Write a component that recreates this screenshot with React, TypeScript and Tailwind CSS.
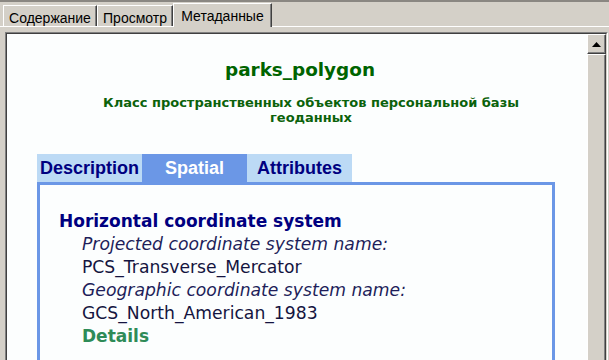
import React from "react";

const WIN = { fontFamily: '"Liberation Sans", Arial, sans-serif' };
const VERD = { fontFamily: '"DejaVu Sans", Verdana, sans-serif' };
const ARIAL = { fontFamily: '"Liberation Sans", Arial, sans-serif' };

function TopTab({ label, selected, w }: { label: string; selected?: boolean; w: string }) {
  if (selected) {
    return (
      <div
        className={`${w} h-[24px] -mb-[1px] flex items-start pt-[2px] justify-center bg-[#d4d0c8] border-l border-t border-white border-r border-r-[#404040] shadow-[inset_-1px_0_0_#808080] text-[14px] text-black`}
      >
        {label}
      </div>
    );
  }
  return (
    <div
      className={`${w} h-[21px] flex items-start pt-[2px] justify-center bg-[#d4d0c8] border-l border-t border-white border-r border-r-[#404040] shadow-[inset_-1px_0_0_#808080] text-[14px] text-black`}
    >
      {label}
    </div>
  );
}

function MetaTab({ label, active }: { label: string; active?: boolean }) {
  return (
    <div
      style={ARIAL}
      className={`w-[105px] h-[28px] flex items-center justify-center text-[18px] font-bold ${
        active ? "bg-[#6b97e6] text-white" : "bg-[#bcdaf5] text-[#000080]"
      }`}
    >
      {label}
    </div>
  );
}

export default function App() {
  return (
    <div style={WIN} className="w-[609px] h-[360px] bg-[#d4d0c8] overflow-hidden flex flex-col">
      {/* window top edge */}
      <div className="h-[2px] bg-[#8a8782] shrink-0" />

      {/* tab strip */}
      <div className="h-[24px] flex items-end pl-[3px] shrink-0 relative">
        <TopTab label="Содержание" w="w-[94px]" />
        <TopTab label="Просмотр" w="w-[76px]" />
        <TopTab label="Метаданные" w="w-[99px]" selected />
        <div className="flex-1" />
      </div>

      {/* tab page */}
      <div className="flex-1 flex flex-col border-t border-white pl-[5px] pr-[1px] pt-[5px] min-h-0">
        <div className="flex-1 flex border-l border-t border-l-[#808080] border-t-[#808080] border-r border-r-white min-h-0">
          <div className="flex-1 flex border-l border-t border-l-[#404040] border-t-[#404040] border-r border-r-[#d4d0c8] min-h-0">
            {/* html area */}
            <div className="flex-1 bg-[#fcfefe] pt-[25px] overflow-hidden" style={VERD}>
              <div className="pl-[6px] text-center text-[18.4px] leading-[22px] font-bold text-[#006400]">
                parks_polygon
              </div>
              <div className="ml-[84px] w-[440px] mt-[14px] text-[13px] leading-[15px] font-bold text-[#0b620b] text-center">
                Класс пространственных объектов персональной базы геоданных
              </div>

              <div className="ml-[30px] mt-[29px] w-[518px]">
                <div className="flex">
                  <MetaTab label="Description" />
                  <MetaTab label="Spatial" active />
                  <MetaTab label="Attributes" />
                </div>
                <div className="border-[3px] border-[#6b97e6] h-[200px] pl-[19px] pt-[25px] text-[17.2px] leading-[23px]">
                  <div className="font-bold text-[17px] text-[#000080]">Horizontal coordinate system</div>
                  <div className="pl-[23px]">
                    <div className="italic text-[#1e1e5a]">Projected coordinate system name:</div>
                    <div className="text-[#141440]">PCS_Transverse_Mercator</div>
                    <div className="italic text-[#1e1e5a]">Geographic coordinate system name:</div>
                    <div className="text-[#141440]">GCS_North_American_1983</div>
                    <div className="font-bold text-[17px] text-[#2e8b57]">Details</div>
                  </div>
                </div>
              </div>
            </div>

            {/* scrollbar */}
            <div className="w-[19px] flex flex-col shrink-0">
              <div className="h-[20px] bg-[#d4d0c8] border-l border-t border-white border-r border-b border-r-[#404040] border-b-[#404040] shadow-[inset_-1px_-1px_0_#808080] flex items-center justify-center">
                <svg width="9" height="5" viewBox="0 0 9 5">
                  <polygon points="4.5,0 9,5 0,5" fill="#000" />
                </svg>
              </div>
              <div className="flex-1 bg-[#d4d0c8] border-l border-t border-white border-r border-r-[#404040] shadow-[inset_-1px_0_0_#808080]" />
            </div>
          </div>
        </div>
      </div>
    </div>
  );
}
